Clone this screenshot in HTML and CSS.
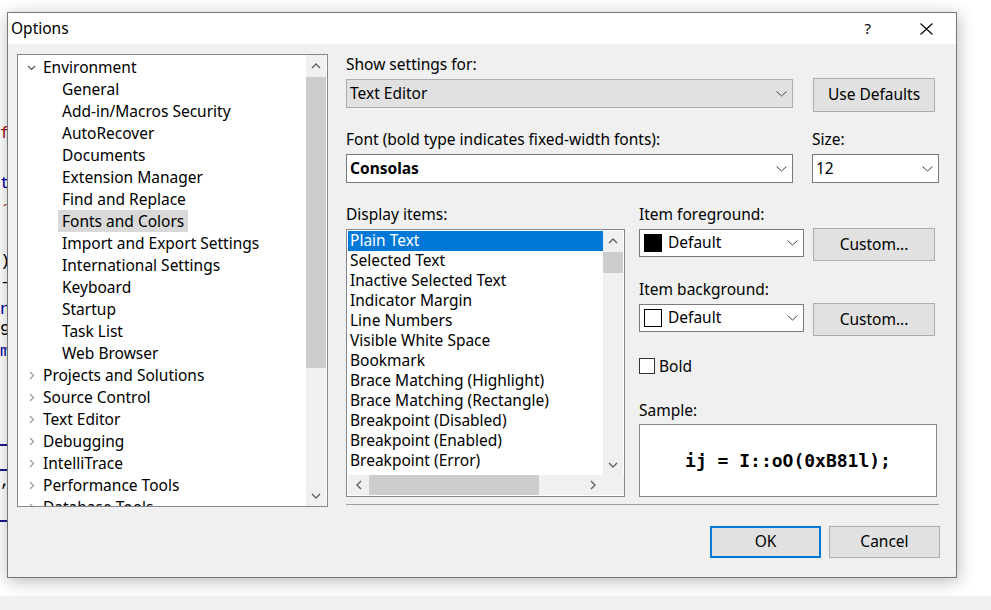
FILE: index.html
```html
<!DOCTYPE html>
<html lang="en">
<head>
<meta charset="utf-8">
<title>Options</title>
<link rel="stylesheet" href="styles.css">
</head>
<body>
<div class="backdrop">
  <span class="frag red" style="top:124px">f</span>
  <span class="frag blue" style="top:174px">t</span>
  <span class="frag red" style="top:202px">´</span>
  <span class="frag" style="top:252px">)</span>
  <span class="frag" style="top:273px">-</span>
  <span class="frag blue" style="top:300px">n</span>
  <span class="frag" style="top:321px">9</span>
  <span class="frag blue" style="top:342px">m</span>
  <span class="fline" style="top:444px"></span>
  <span class="fline" style="top:469px"></span>
  <span class="frag" style="top:472px">,</span>
  <span class="fline" style="top:520px"></span>
</div>

<div class="dialog">
  <div class="titlebar">
    <span class="title">Options</span>
    <span class="help">?</span>
    <svg class="close" width="13" height="12" viewBox="0 0 13 12"><path d="M0.5 0.5 L12.5 11.5 M12.5 0.5 L0.5 11.5" stroke="#000" stroke-width="1.1" fill="none"/></svg>
  </div>
  <div class="body">
    <div class="tree">
      <div class="tree-list">
        <div class="node"><svg class="chev-down" width="9" height="6" viewBox="0 0 9 6"><path d="M1 1 L4.5 4.5 L8 1" stroke="#555" stroke-width="1.2" fill="none"/></svg><span>Environment</span></div>
        <div class="child"><span>General</span></div>
        <div class="child"><span>Add-in/Macros Security</span></div>
        <div class="child"><span>AutoRecover</span></div>
        <div class="child"><span>Documents</span></div>
        <div class="child"><span>Extension Manager</span></div>
        <div class="child"><span>Find and Replace</span></div>
        <div class="child"><span class="sel">Fonts and Colors</span></div>
        <div class="child"><span>Import and Export Settings</span></div>
        <div class="child"><span>International Settings</span></div>
        <div class="child"><span>Keyboard</span></div>
        <div class="child"><span>Startup</span></div>
        <div class="child"><span>Task List</span></div>
        <div class="child"><span>Web Browser</span></div>
        <div class="node"><svg class="chev-right" width="6" height="9" viewBox="0 0 6 9"><path d="M1 1 L4.5 4.5 L1 8" stroke="#9a9a9a" stroke-width="1.2" fill="none"/></svg><span>Projects and Solutions</span></div>
        <div class="node"><svg class="chev-right" width="6" height="9" viewBox="0 0 6 9"><path d="M1 1 L4.5 4.5 L1 8" stroke="#9a9a9a" stroke-width="1.2" fill="none"/></svg><span>Source Control</span></div>
        <div class="node"><svg class="chev-right" width="6" height="9" viewBox="0 0 6 9"><path d="M1 1 L4.5 4.5 L1 8" stroke="#9a9a9a" stroke-width="1.2" fill="none"/></svg><span>Text Editor</span></div>
        <div class="node"><svg class="chev-right" width="6" height="9" viewBox="0 0 6 9"><path d="M1 1 L4.5 4.5 L1 8" stroke="#9a9a9a" stroke-width="1.2" fill="none"/></svg><span>Debugging</span></div>
        <div class="node"><svg class="chev-right" width="6" height="9" viewBox="0 0 6 9"><path d="M1 1 L4.5 4.5 L1 8" stroke="#9a9a9a" stroke-width="1.2" fill="none"/></svg><span>IntelliTrace</span></div>
        <div class="node"><svg class="chev-right" width="6" height="9" viewBox="0 0 6 9"><path d="M1 1 L4.5 4.5 L1 8" stroke="#9a9a9a" stroke-width="1.2" fill="none"/></svg><span>Performance Tools</span></div>
        <div class="node"><svg class="chev-right" width="6" height="9" viewBox="0 0 6 9"><path d="M1 1 L4.5 4.5 L1 8" stroke="#9a9a9a" stroke-width="1.2" fill="none"/></svg><span>Database Tools</span></div>
      </div>
      <div class="vscroll tree-scroll">
        <div class="sbtn"><svg width="10" height="6" viewBox="0 0 10 6"><path d="M1 5 L5 1 L9 5" stroke="#606060" stroke-width="1.4" fill="none"/></svg></div>
        <div class="thumb tree-thumb"></div>
        <div class="sfill"></div>
        <div class="sbtn"><svg width="10" height="6" viewBox="0 0 10 6"><path d="M1 1 L5 5 L9 1" stroke="#606060" stroke-width="1.4" fill="none"/></svg></div>
      </div>
    </div>

    <div class="panel">
      <div class="row row-a">
        <div class="col-wide">
          <div class="label">Show settings for:</div>
          <div class="combo gray">
            <span class="ctext">Text Editor</span>
            <svg class="cchev" width="11" height="6" viewBox="0 0 11 6"><path d="M0.5 0.5 L5.5 5 L10.5 0.5" stroke="#444" stroke-width="1" fill="none"/></svg>
          </div>
        </div>
        <div class="col-narrow">
          <div class="btn defaults">Use Defaults</div>
        </div>
      </div>

      <div class="row row-b">
        <div class="col-wide">
          <div class="label">Font (bold type indicates fixed-width fonts):</div>
          <div class="combo">
            <span class="ctext bold">Consolas</span>
            <svg class="cchev" width="11" height="6" viewBox="0 0 11 6"><path d="M0.5 0.5 L5.5 5 L10.5 0.5" stroke="#444" stroke-width="1" fill="none"/></svg>
          </div>
        </div>
        <div class="col-size">
          <div class="label">Size:</div>
          <div class="combo size">
            <span class="ctext">12</span>
            <svg class="cchev" width="11" height="6" viewBox="0 0 11 6"><path d="M0.5 0.5 L5.5 5 L10.5 0.5" stroke="#444" stroke-width="1" fill="none"/></svg>
          </div>
        </div>
      </div>

      <div class="row row-c">
        <div class="col-list">
          <div class="label">Display items:</div>
          <div class="listbox">
            <div class="lb-main">
              <div class="lb-items">
                <div class="item selected">Plain Text</div>
                <div class="item">Selected Text</div>
                <div class="item">Inactive Selected Text</div>
                <div class="item">Indicator Margin</div>
                <div class="item">Line Numbers</div>
                <div class="item">Visible White Space</div>
                <div class="item">Bookmark</div>
                <div class="item">Brace Matching (Highlight)</div>
                <div class="item">Brace Matching (Rectangle)</div>
                <div class="item">Breakpoint (Disabled)</div>
                <div class="item">Breakpoint (Enabled)</div>
                <div class="item">Breakpoint (Error)</div>
              </div>
              <div class="vscroll lb-vscroll">
                <div class="sbtn"><svg width="10" height="6" viewBox="0 0 10 6"><path d="M1 5 L5 1 L9 5" stroke="#606060" stroke-width="1.4" fill="none"/></svg></div>
                <div class="thumb lb-thumb"></div>
                <div class="sfill"></div>
                <div class="sbtn"><svg width="10" height="6" viewBox="0 0 10 6"><path d="M1 1 L5 5 L9 1" stroke="#606060" stroke-width="1.4" fill="none"/></svg></div>
              </div>
            </div>
            <div class="hscroll">
              <div class="hbtn"><svg width="6" height="10" viewBox="0 0 6 10"><path d="M5 1 L1 5 L5 9" stroke="#606060" stroke-width="1.4" fill="none"/></svg></div>
              <div class="hthumb"></div>
              <div class="sfill"></div>
              <div class="hbtn"><svg width="6" height="10" viewBox="0 0 6 10"><path d="M1 1 L5 5 L1 9" stroke="#606060" stroke-width="1.4" fill="none"/></svg></div>
              <div class="corner"></div>
            </div>
          </div>
        </div>

        <div class="col-props">
          <div class="label">Item foreground:</div>
          <div class="prop-row">
            <div class="combo color">
              <span class="swatch black"></span>
              <span class="ctext">Default</span>
              <svg class="cchev" width="11" height="6" viewBox="0 0 11 6"><path d="M0.5 0.5 L5.5 5 L10.5 0.5" stroke="#444" stroke-width="1" fill="none"/></svg>
            </div>
            <div class="btn custom">Custom...</div>
          </div>
          <div class="label lbl-bg">Item background:</div>
          <div class="prop-row">
            <div class="combo color">
              <span class="swatch white"></span>
              <span class="ctext">Default</span>
              <svg class="cchev" width="11" height="6" viewBox="0 0 11 6"><path d="M0.5 0.5 L5.5 5 L10.5 0.5" stroke="#444" stroke-width="1" fill="none"/></svg>
            </div>
            <div class="btn custom">Custom...</div>
          </div>
          <div class="check-row">
            <span class="checkbox"></span>
            <span class="check-label">Bold</span>
          </div>
          <div class="label lbl-sample">Sample:</div>
          <div class="sample">ij = I::oO(0xB81l);</div>
        </div>
      </div>

      <div class="separator"></div>

      <div class="actions">
        <div class="btn action ok">OK</div>
        <div class="btn action">Cancel</div>
      </div>
    </div>
  </div>
</div>
<div class="taskstrip"></div>
</body>
</html>
```

FILE: styles.css
```css
* { box-sizing: border-box; }

html, body {
  margin: 0;
  padding: 0;
  background: #ffffff;
  width: 991px;
  height: 610px;
  overflow: hidden;
  font-family: "Noto Sans", "Liberation Sans", sans-serif;
  font-size: 15.5px;
  color: #000;
}

body { position: relative; }

.backdrop {
  position: absolute;
  left: 0;
  top: 0;
  width: 7px;
  height: 596px;
}

.frag {
  position: absolute;
  left: 0;
  font-family: "Liberation Mono", monospace;
  font-size: 17px;
  line-height: 20px;
  color: #000;
}
.frag.red { color: #a31515; }
.frag.blue { color: #0000a0; }

.fline {
  position: absolute;
  left: 0;
  width: 7px;
  height: 2px;
  background: #1a1a8a;
}

.dialog {
  position: relative;
  margin: 12px 0 0 7px;
  width: 950px;
  height: 566px;
  border: 1px solid #767676;
  background: #f0f0f0;
  box-shadow: 1px 3px 16px rgba(0, 0, 0, 0.28);
  display: flex;
  flex-direction: column;
}

.titlebar {
  height: 31px;
  background: #ffffff;
  display: flex;
  align-items: center;
  padding-left: 3px;
  flex: none;
}
.title { font-size: 15.5px; flex: 1; padding-bottom: 2px; }
.help { font-size: 15px; margin-right: 49px; padding-bottom: 2px; }
.close { margin-right: 23px; }

.body {
  flex: 1;
  display: flex;
  padding: 10px 0 0 9px;
}

/* Tree */
.tree {
  width: 311px;
  height: 453px;
  border: 1px solid #828790;
  background: #fff;
  display: flex;
  flex: none;
}
.tree-list {
  flex: 1;
  padding-top: 1px;
  overflow: hidden;
}
.node, .child {
  height: 22px;
  line-height: 22px;
  white-space: nowrap;
  display: flex;
  align-items: flex-start;
}
.node { padding-left: 25px; position: relative; }
.node svg { position: absolute; }
.chev-down { left: 9px; top: 9px; }
.chev-right { left: 11px; top: 7px; }
.child { padding-left: 40px; }
.child span { padding: 0 4px; height: 22px; }
.child .sel { background: #d9d9d9; }

.vscroll {
  width: 20px;
  background: #f0f0f0;
  display: flex;
  flex-direction: column;
  flex: none;
}
.tree-scroll { margin-right: 1px; }
.sbtn {
  height: 21px;
  display: flex;
  align-items: center;
  justify-content: center;
  flex: none;
}
.thumb { background: #cdcdcd; flex: none; }
.tree-thumb { height: 291px; margin-top: 1px; }
.sfill { flex: 1; }

/* Right panel */
.panel {
  margin-left: 18px;
  width: 594px;
  flex: none;
}
.row { display: flex; align-items: flex-start; }
.label { height: 20px; line-height: 20px; white-space: nowrap; }

.col-wide { width: 447px; flex: none; }
.col-narrow { margin-left: 20px; padding-top: 24px; }
.col-size { margin-left: 19px; }

.row-a { height: 58px; }
.row-b { margin-top: 17px; }
.row-c { margin-top: 21px; }

.combo {
  margin-top: 5px;
  height: 29px;
  border: 1px solid #7a7a7a;
  background: #fff;
  display: flex;
  align-items: center;
  padding-left: 3px;
  position: relative;
}
.combo.gray { background: #e1e1e1; border-color: #adadad; }
.combo.size { width: 127px; }
.ctext { flex: 1; white-space: nowrap; padding-bottom: 2px; }
.ctext.bold { font-weight: bold; }
.cchev { margin-right: 5px; flex: none; }

.btn {
  background: #e1e1e1;
  border: 1px solid #adadad;
  display: flex;
  align-items: center;
  justify-content: center;
  white-space: nowrap;
  padding-bottom: 2px;
}
.defaults { width: 122px; height: 34px; }

.col-list { width: 279px; flex: none; }
.listbox {
  margin-top: 5px;
  height: 268px;
  border: 1px solid #828790;
  background: #fff;
  display: flex;
  flex-direction: column;
}
.lb-main {
  flex: 1;
  display: flex;
  padding: 1px 0 0 1px;
  overflow: hidden;
}
.lb-items { flex: 1; overflow: hidden; }
.item {
  height: 20px;
  line-height: 19px;
  padding-left: 2px;
  white-space: nowrap;
}
.item.selected { background: #0078d7; color: #fff; }
.lb-vscroll { width: 20px; margin-right: 1px; }
.lb-vscroll .sbtn { height: 20px; }
.lb-thumb { height: 21px; margin-top: 1px; }

.hscroll {
  height: 20px;
  margin: 0 0 1px 1px;
  background: #f0f0f0;
  display: flex;
  flex: none;
}
.hbtn {
  width: 21px;
  display: flex;
  align-items: center;
  justify-content: center;
  flex: none;
}
.hthumb { width: 170px; background: #cdcdcd; flex: none; }
.corner { width: 21px; background: #f0f0f0; flex: none; }

.col-props { margin-left: 14px; width: 298px; flex: none; }
.prop-row { display: flex; align-items: flex-start; margin-top: 4px; }
.combo.color { margin-top: 1px; width: 165px; height: 28px; padding-left: 4px; }
.swatch { width: 18px; height: 18px; margin-right: 6px; flex: none; }
.swatch.black { background: #000; }
.swatch.white { background: #fff; border: 1px solid #000; }
.custom { margin-left: 9px; width: 122px; height: 33px; }
.lbl-bg { margin-top: 18px; }

.check-row {
  margin-top: 22px;
  height: 16px;
  display: flex;
  align-items: center;
}
.checkbox {
  width: 16px;
  height: 16px;
  border: 1px solid #333;
  background: #fff;
  flex: none;
}
.check-label { margin-left: 4px; line-height: 20px; }

.lbl-sample { margin-top: 26px; }
.sample {
  margin-top: 4px;
  height: 73px;
  width: 298px;
  border: 1px solid #828790;
  background: #fff;
  display: flex;
  align-items: center;
  justify-content: center;
  font-family: "DejaVu Sans Mono", "Liberation Mono", monospace;
  font-weight: bold;
  font-size: 18px;
  white-space: pre;
}

.separator {
  margin-top: 7px;
  width: 593px;
  height: 1px;
  background: #a0a0a0;
}

.actions {
  margin-top: 21px;
  display: flex;
  justify-content: flex-end;
  gap: 8px;
}
.action { width: 111px; height: 32px; }
.action.ok { border: 2px solid #0078d7; }

.taskstrip {
  margin-top: 18px;
  height: 14px;
  background: #f0f0f0;
}
```
